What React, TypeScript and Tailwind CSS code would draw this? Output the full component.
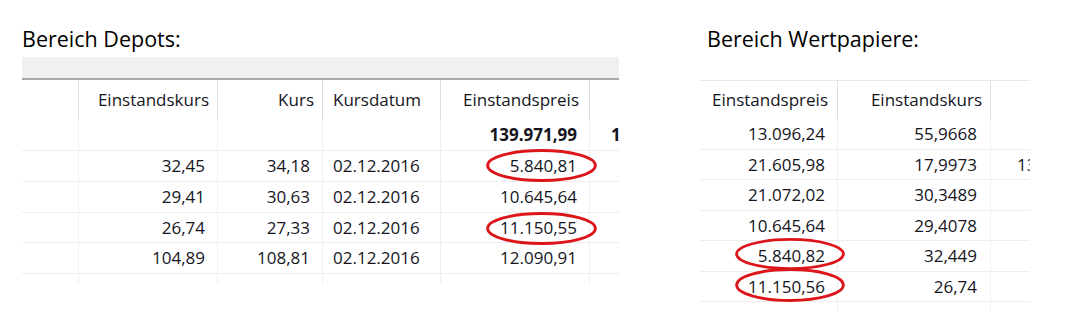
type Row = { cells: string[]; h: string; oval?: string }

const leftCols = 'grid grid-cols-[57px_139px_105px_118px_149px_29px]'
const rightCols = 'grid grid-cols-[138px_153px_39px]'

const leftRows: Row[] = [
  { cells: ['', '32,45', '34,18', '02.12.2016', '5.840,81', ''], h: 'h-[31px]', oval: 'left-[464px] -top-[2px] w-[111px] h-[33px]' },
  { cells: ['', '29,41', '30,63', '02.12.2016', '10.645,64', ''], h: 'h-[31px]' },
  { cells: ['', '26,74', '27,33', '02.12.2016', '11.150,55', ''], h: 'h-[30px]', oval: 'left-[464px] -top-[1px] w-[111px] h-[33px]' },
  { cells: ['', '104,89', '108,81', '02.12.2016', '12.090,91', ''], h: 'h-[31px]' },
]

const rightRows: Row[] = [
  { cells: ['13.096,24', '55,9668', ''], h: 'h-[31px]' },
  { cells: ['21.605,98', '17,9973', '13'], h: 'h-[30px]' },
  { cells: ['21.072,02', '30,3489', ''], h: 'h-[31px]' },
  { cells: ['10.645,64', '29,4078', ''], h: 'h-[30px]' },
  { cells: ['5.840,82', '32,449', ''], h: 'h-[31px]', oval: 'left-[35px] -top-[3px] w-[110px] h-[32px]' },
  { cells: ['11.150,56', '26,74', ''], h: 'h-[30px]', oval: 'left-[35px] -top-[4px] w-[110px] h-[34px]' },
]

function Oval({ className }: { className: string }) {
  return (
    <svg className={`pointer-events-none absolute z-10 ${className}`} viewBox="0 0 110 33" preserveAspectRatio="none">
      <ellipse cx="55" cy="16.5" rx="53.4" ry="15" fill="none" stroke="#dc151b" strokeWidth="2.8" />
    </svg>
  )
}

export default function App() {
  return (
    <div className="flex h-[332px] w-[1066px] overflow-hidden bg-white font-['Open_Sans',sans-serif] text-[17px] text-[#15151d]">
      {/* Bereich Depots */}
      <div className="ml-[22px] flex w-[597px] flex-col">
        <div className="h-[57px] pt-[27px] text-[21.5px] leading-[24px] text-black">Bereich Depots:</div>
        <div className="h-[23px] border-b-2 border-[#a8a8a8] bg-[#f0f0f0]" />

        <div className={`${leftCols} h-[40px]`}>
          <div className="border-r border-[#dedede]" />
          <div className="flex items-center justify-end border-r border-[#dedede] pr-[8px]">Einstandskurs</div>
          <div className="flex items-center justify-end border-r border-[#dedede] pr-[8px]">Kurs</div>
          <div className="flex items-center border-r border-[#dedede] pl-[10px]">Kursdatum</div>
          <div className="flex items-center justify-end border-r border-[#dedede] pr-[10px]">Einstandspreis</div>
          <div />
        </div>

        <div className={`${leftCols} h-[31px] border-b border-[#ededed] font-bold`}>
          <div className="border-r border-[#f0f0f0]" />
          <div className="border-r border-[#f0f0f0]" />
          <div className="border-r border-[#f0f0f0]" />
          <div className="border-r border-[#f0f0f0]" />
          <div className="flex items-center justify-end border-r border-[#f0f0f0] pr-[12px]">139.971,99</div>
          <div className="flex items-center overflow-hidden whitespace-nowrap pl-[21px]">139</div>
        </div>

        {leftRows.map((r, i) => (
          <div key={i} className={`${leftCols} relative border-b border-[#ededed] ${r.h}`}>
            <div className="border-r border-[#f0f0f0]" />
            <div className="flex items-center justify-end border-r border-[#f0f0f0] pr-[12px]">{r.cells[1]}</div>
            <div className="flex items-center justify-end border-r border-[#f0f0f0] pr-[12px]">{r.cells[2]}</div>
            <div className="flex items-center border-r border-[#f0f0f0] pl-[10px]">{r.cells[3]}</div>
            <div className="flex items-center justify-end border-r border-[#f0f0f0] pr-[12px]">{r.cells[4]}</div>
            <div />
            {r.oval && <Oval className={r.oval} />}
          </div>
        ))}

        <div className={`${leftCols} h-[10px]`}>
          <div className="border-r border-[#f0f0f0]" />
          <div className="border-r border-[#f0f0f0]" />
          <div className="border-r border-[#f0f0f0]" />
          <div className="border-r border-[#f0f0f0]" />
          <div className="border-r border-[#f0f0f0]" />
          <div />
        </div>
      </div>

      {/* Bereich Wertpapiere */}
      <div className="ml-[81px] flex w-[330px] flex-col">
        <div className="h-[80px] pl-[7px] pt-[27px] text-[21.5px] leading-[24px] text-black">Bereich Wertpapiere:</div>

        <div className={`${rightCols} h-[39px] border-t border-[#e8e8e8]`}>
          <div className="flex items-center justify-end border-r border-[#dedede] pr-[9px]">Einstandspreis</div>
          <div className="flex items-center justify-end border-r border-[#dedede] pr-[8px]">Einstandskurs</div>
          <div />
        </div>

        {rightRows.map((r, i) => (
          <div key={i} className={`${rightCols} relative border-b border-[#ededed] ${r.h}`}>
            <div className="flex items-center justify-end border-r border-[#f0f0f0] pr-[12px]">{r.cells[0]}</div>
            <div className="flex items-center justify-end border-r border-[#f0f0f0] pr-[13px]">{r.cells[1]}</div>
            <div className="flex items-center overflow-hidden whitespace-nowrap pl-[26px]">{r.cells[2]}</div>
            {r.oval && <Oval className={r.oval} />}
          </div>
        ))}

        <div className={`${rightCols} h-[10px]`}>
          <div className="border-r border-[#f0f0f0]" />
          <div className="border-r border-[#f0f0f0]" />
          <div />
        </div>
      </div>
    </div>
  )
}
